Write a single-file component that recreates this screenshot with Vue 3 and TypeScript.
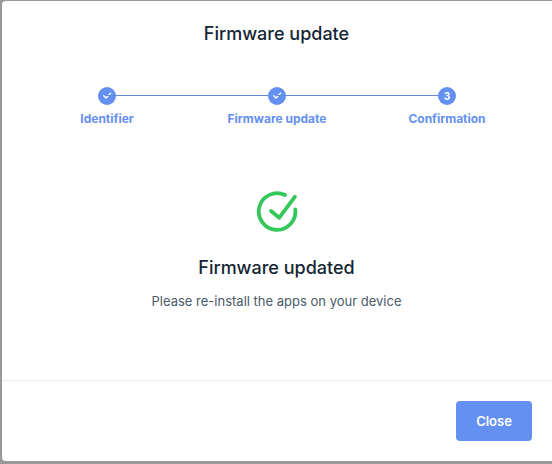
<script setup lang="ts">
interface Step {
  label: string
  done: boolean
  num: number
}
const steps: Step[] = [
  { label: 'Identifier', done: true, num: 1 },
  { label: 'Firmware update', done: true, num: 2 },
  { label: 'Confirmation', done: false, num: 3 },
]
</script>

<template>
  <div class="backdrop">
    <div class="modal">
      <h1 class="title">Firmware update</h1>
      <div class="stepper">
        <div v-for="(s, i) in steps" :key="s.label" class="step">
          <span v-if="i > 0" class="line"></span>
          <span class="dot">
            <svg v-if="s.done" width="10" height="10" viewBox="0 0 10 10" fill="none">
              <path d="M1.7 4.8 L4 7 L8.6 2.2" stroke="#fff" stroke-width="1.4" stroke-linecap="round" stroke-linejoin="round" />
            </svg>
            <template v-else>{{ s.num }}</template>
          </span>
          <span class="label">{{ s.label }}</span>
        </div>
      </div>
      <div class="result">
        <svg class="big" width="44" height="44" viewBox="0 0 44 44" fill="none">
          <path d="M40.3 19.5 A18.3 18.3 0 1 1 30 5" stroke="#34c759" stroke-width="3.8" stroke-linecap="round" />
          <path d="M16 21 L24.3 27.7 L40 6.7" stroke="#34c759" stroke-width="3.8" stroke-linecap="round" stroke-linejoin="round" />
        </svg>
        <h2 class="heading">Firmware updated</h2>
        <p class="sub">Please re-install the apps on your device</p>
      </div>
      <div class="footer">
        <button class="close" type="button">Close</button>
      </div>
    </div>
  </div>
</template>

<style>
html, body { margin: 0; padding: 0; background: #999; }
</style>

<style scoped>
.backdrop {
  width: 552px;
  height: 464px;
  background: #999;
  padding: 1px 0 3px 2px;
  box-sizing: border-box;
  overflow: hidden;
  font-family: Inter, "Noto Sans", sans-serif;
}
.modal {
  width: 560px;
  height: 460px;
  background: #fff;
  border-radius: 4px;
  display: flex;
  flex-direction: column;
  box-sizing: border-box;
}
.title {
  margin: 22px 0 0;
  width: 549px;
  text-align: center;
  font-size: 18px;
  line-height: 22px;
  font-weight: 500;
  color: #142533;
}
.stepper {
  display: grid;
  grid-template-columns: repeat(3, 170px);
  margin: 42px 0 0 20px;
}
.step {
  position: relative;
  display: flex;
  flex-direction: column;
  align-items: center;
}
.line {
  position: absolute;
  top: 8px;
  right: 50%;
  width: 170px;
  height: 1px;
  background: #6489d6;
}
.dot {
  position: relative;
  width: 18px;
  height: 18px;
  border-radius: 50%;
  background: #6490f1;
  color: #fff;
  font-size: 10px;
  font-weight: 700;
  display: flex;
  align-items: center;
  justify-content: center;
}
.label {
  margin-top: 7px;
  font-size: 12px;
  line-height: 14px;
  font-weight: 700;
  color: #6490f1;
  white-space: nowrap;
}
.result {
  width: 549px;
  display: flex;
  flex-direction: column;
  align-items: center;
  margin-top: 64px;
}
.big { display: block; }
.heading {
  margin: 24px 0 0;
  font-size: 18px;
  line-height: 20px;
  font-weight: 500;
  color: #142533;
}
.sub {
  margin: 15px 0 0;
  font-size: 13px;
  line-height: 16px;
  color: #4a5a68;
}
.footer {
  margin-top: auto;
  width: 550px;
  height: 81px;
  box-sizing: border-box;
  border-top: 1px solid #eaeaea;
  display: flex;
  justify-content: flex-end;
  align-items: flex-start;
  padding: 20px 20px 0 0;
}
.close {
  width: 76px;
  height: 40px;
  border: none;
  border-radius: 4px;
  background: #6490f1;
  color: #fff;
  font-family: inherit;
  font-size: 13px;
  font-weight: 600;
}
</style>
